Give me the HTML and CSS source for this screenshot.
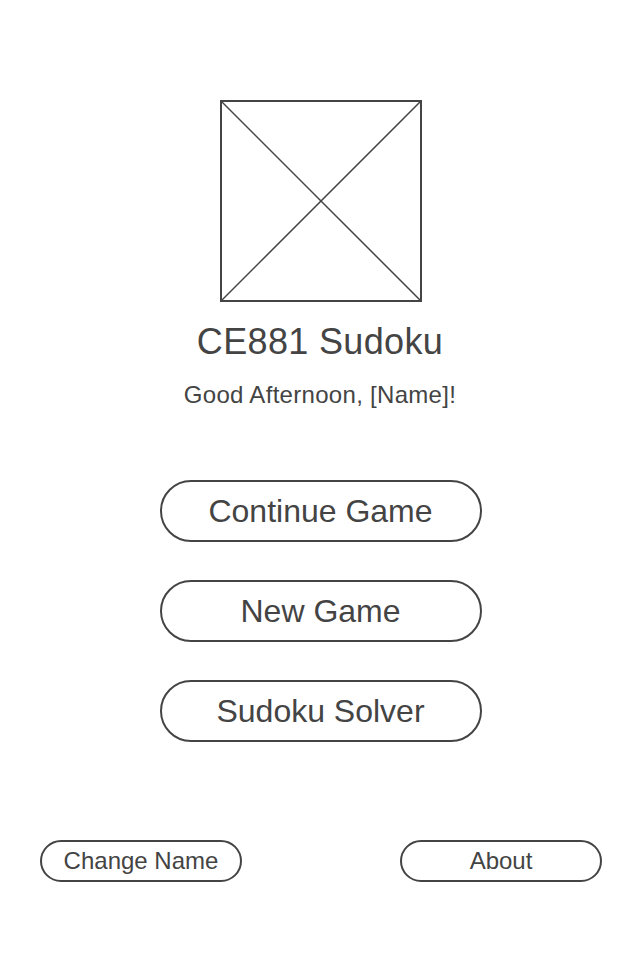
FILE: index.html
```html
<!DOCTYPE html>
<html>
<head>
<meta charset="utf-8">
<link rel="stylesheet" href="styles.css">
</head>
<body>
<div class="screen">
  <div class="logo">
    <svg width="202" height="202" viewBox="0 0 202 202">
      <rect x="1" y="1" width="200" height="200" fill="none" stroke="#444" stroke-width="2"/>
      <line x1="1" y1="1" x2="201" y2="201" stroke="#444" stroke-width="1.5"/>
      <line x1="201" y1="1" x2="1" y2="201" stroke="#444" stroke-width="1.5"/>
    </svg>
  </div>
  <h1 class="title">CE881 Sudoku</h1>
  <p class="greeting">Good Afternoon, [Name]!</p>
  <div class="menu">
    <button class="btn big">Continue Game</button>
    <button class="btn big">New Game</button>
    <button class="btn big">Sudoku Solver</button>
  </div>
  <div class="footer">
    <button class="btn small">Change Name</button>
    <button class="btn small">About</button>
  </div>
</div>
</body>
</html>
```
FILE: styles.css
```css
html, body {
  margin: 0;
  padding: 0;
  background: #fff;
}
.screen {
  width: 640px;
  height: 960px;
  box-sizing: border-box;
  padding-top: 100px;
  display: flex;
  flex-direction: column;
  align-items: center;
  font-family: "Liberation Sans", Arial, sans-serif;
  color: #444;
}
.logo {
  width: 202px;
  height: 202px;
  margin-left: 1px;
}
.logo svg {
  display: block;
}
.title {
  margin: 20px 0 0;
  font-size: 36px;
  font-weight: normal;
  line-height: 40px;
  letter-spacing: 0.35px;
}
.greeting {
  margin: 19px 0 0;
  font-size: 24px;
  line-height: 28px;
  letter-spacing: 0.3px;
}
.menu {
  margin-top: 71px;
  display: flex;
  flex-direction: column;
  gap: 38px;
  align-items: center;
}
.btn {
  box-sizing: border-box;
  background: #fff;
  border: 2px solid #444;
  color: #444;
  font-family: "Liberation Sans", Arial, sans-serif;
  display: flex;
  align-items: center;
  justify-content: center;
  padding: 0;
}
.btn.big {
  width: 322px;
  height: 62px;
  border-radius: 31px;
  font-size: 32px;
  margin-left: 1px;
}
.footer {
  margin-top: 98px;
  width: 100%;
  box-sizing: border-box;
  padding: 0 38px 0 40px;
  display: flex;
  justify-content: space-between;
}
.btn.small {
  width: 202px;
  height: 42px;
  border-radius: 21px;
  font-size: 24px;
}
```
